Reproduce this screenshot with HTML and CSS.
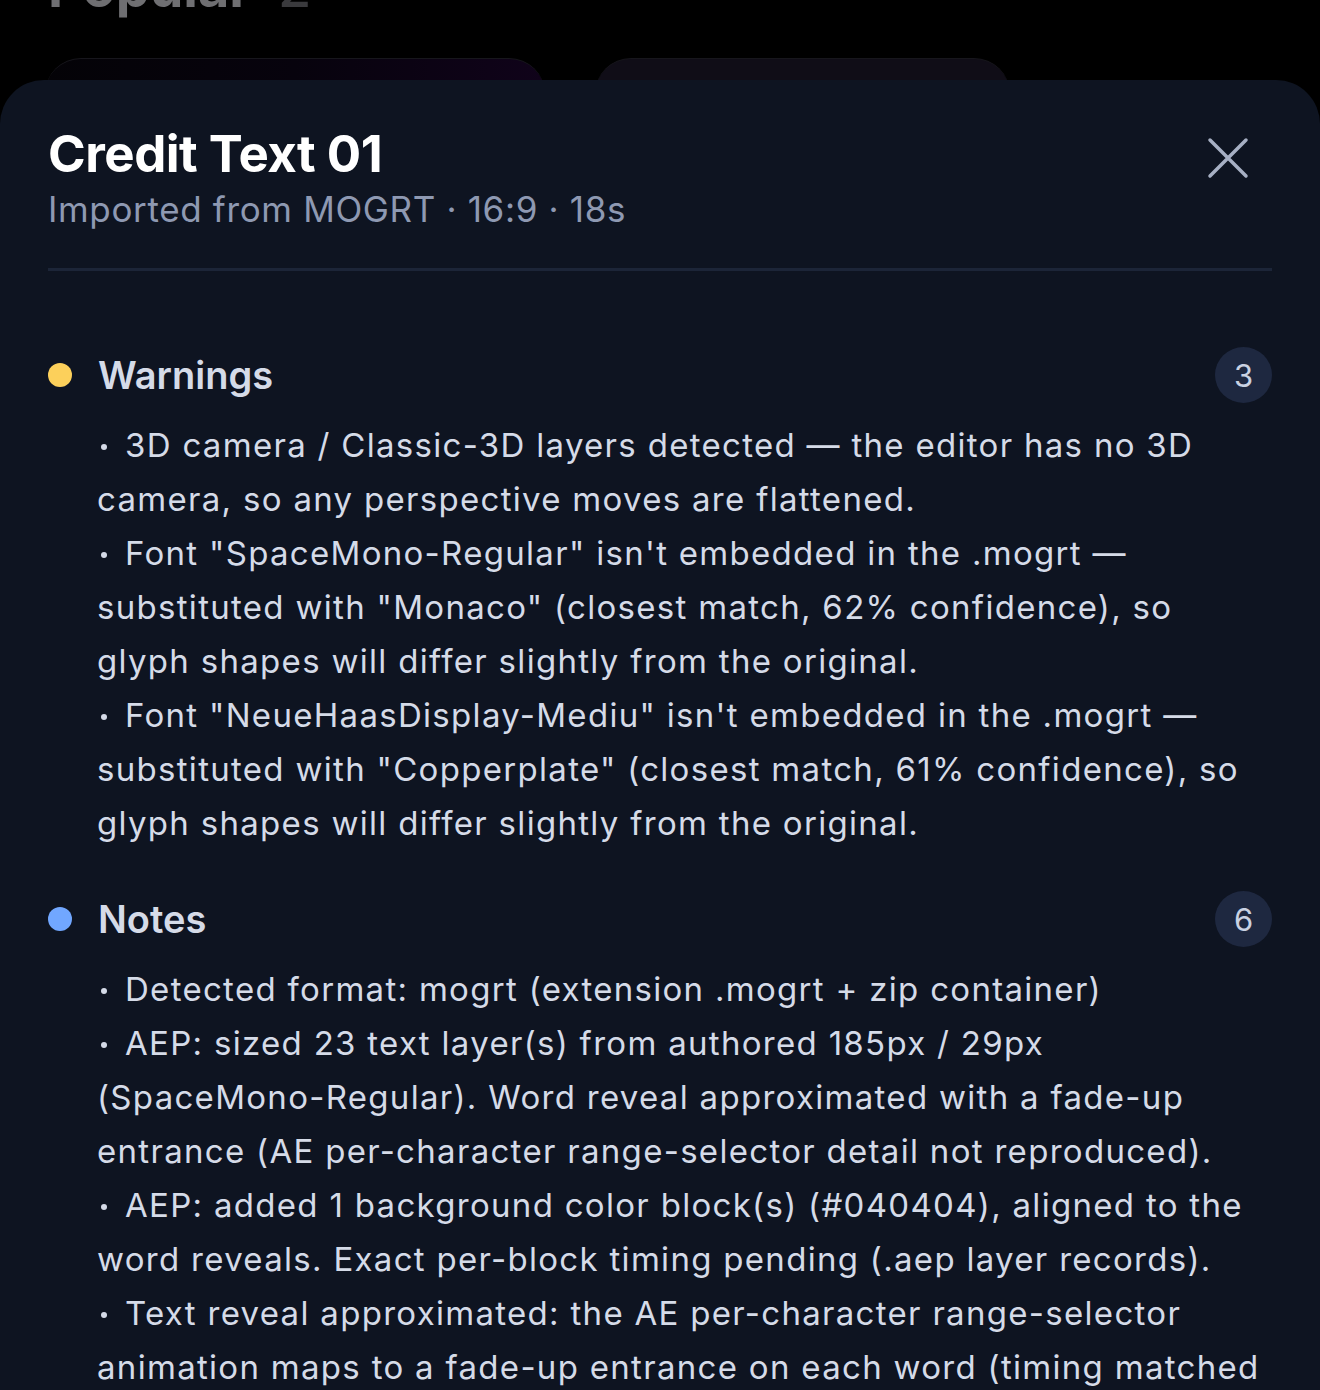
FILE: index.html
```html
<!DOCTYPE html>
<html lang="en">

<head>
  <meta charset="UTF-8">
  <meta name="viewport" content="width=device-width, initial-scale=1.0">
  <title>Credit Text 01</title>
  <link rel="stylesheet" href="styles.css">
</head>

<body>
  <!-- page behind the sheet -->
  <div class="page">
    <h2 class="shelfTitle">Popular <span class="shelfCount">2</span></h2>
    <div class="cards">
      <div class="card cardOne"></div>
      <div class="card cardTwo"></div>
    </div>
  </div>

  <!-- import report sheet -->
  <div class="sheet">
    <div class="sheetHead">
      <div>
        <h1 class="title">Credit Text 01</h1>
        <p class="meta">Imported from MOGRT · 16:9 · 18s</p>
      </div>
      <button class="close" aria-label="Close">
        <svg width="44" height="44" viewBox="0 0 44 44" fill="none">
          <path d="M4 4L40 40M40 4L4 40" stroke="#a7b0c4" stroke-width="3.5" stroke-linecap="round" />
        </svg>
      </button>
    </div>

    <section class="group">
      <div class="groupHead">
        <span class="dot warn"></span>
        <h3>Warnings</h3>
        <span class="count">3</span>
      </div>
      <ul class="items">
        <li><i class="bullet"></i>3D camera / Classic-3D layers detected — the editor has no 3D camera, so any perspective moves are flattened.</li>
        <li><i class="bullet"></i>Font "SpaceMono-Regular" isn't embedded in the .mogrt — substituted with "Monaco" (closest match, 62% confidence), so glyph shapes will differ slightly from the original.</li>
        <li><i class="bullet"></i>Font "NeueHaasDisplay-Mediu" isn't embedded in the .mogrt — substituted with "Copperplate" (closest match, 61% confidence), so glyph shapes will differ slightly from the original.</li>
      </ul>
    </section>

    <section class="group">
      <div class="groupHead">
        <span class="dot note"></span>
        <h3>Notes</h3>
        <span class="count">6</span>
      </div>
      <ul class="items">
        <li><i class="bullet"></i>Detected format: mogrt (extension .mogrt + zip container)</li>
        <li><i class="bullet"></i>AEP: sized 23 text layer(s) from authored 185px / 29px (SpaceMono-Regular). Word reveal approximated with a fade-up entrance (AE per-character range-selector detail not reproduced).</li>
        <li><i class="bullet"></i>AEP: added 1 background color block(s) (#040404), aligned to the word reveals. Exact per-block timing pending (.aep layer records).</li>
        <li><i class="bullet"></i>Text reveal approximated: the AE per-character range-selector animation maps to a fade-up entrance on each word (timing matched to the source keyframes).</li>
        <li><i class="bullet"></i>Essential Graphics controls mapped: 4 text fields, 2 colors.</li>
        <li><i class="bullet"></i>Audio tracks not found in the package.</li>
      </ul>
    </section>
  </div>
</body>

</html>
```

FILE: styles.css
```css
* {
  margin: 0;
  padding: 0;
  box-sizing: border-box;
}

html,
body {
  height: 1390px;
  overflow: hidden;
}

body {
  background: #000;
  font-family: Inter, "Noto Sans", sans-serif;
  position: relative;
}

ul li {
  list-style: none;
}

/* 背景页面 */
.page {
  padding: 0 45px;
}

.shelfTitle {
  font-size: 54px;
  font-weight: 700;
  color: #6f6f72;
  margin-top: -42px;
  padding-left: 3px;
  line-height: 60px;
}

.shelfCount {
  font-weight: 500;
  color: #3a3a3d;
  margin-left: 14px;
}

.cards {
  display: flex;
  gap: 50px;
  margin-top: 40px;
}

.card {
  height: 120px;
  border-radius: 36px;
  border-top: 1px solid #17161c;
}

.cardOne {
  width: 500px;
  background: linear-gradient(90deg, #040307 0%, #07030d 50%, #10031a 100%);
}

.cardTwo {
  width: 415px;
  background: #100d17;
}

/* 弹出面板 */
.sheet {
  position: absolute;
  left: 0;
  top: 80px;
  width: 1320px;
  height: 1400px;
  background: #0e1421;
  border-radius: 44px 44px 0 0;
  padding: 44px 48px 0;
}

.sheetHead {
  display: flex;
  justify-content: space-between;
  align-items: flex-start;
  padding-bottom: 36px;
  border-bottom: 3px solid #1c2538;
}

.title {
  font-size: 51px;
  font-weight: 700;
  color: #fff;
  line-height: 60px;
  letter-spacing: -0.5px;
}

.meta {
  font-size: 35px;
  color: #8e99b2;
  line-height: 46px;
  margin-top: 2px;
  letter-spacing: 0.65px;
}

.close {
  background: none;
  border: 0;
  margin: 12px 22px 0 0;
  width: 44px;
  height: 44px;
}

.group {
  margin-top: 76px;
}

.group + .group {
  margin-top: 41px;
}

.groupHead {
  display: flex;
  align-items: center;
  height: 56px;
}

.dot {
  width: 24px;
  height: 24px;
  border-radius: 50%;
  margin-right: 26px;
}

.warn {
  background: #fcd05b;
}

.note {
  background: #71a7ff;
}

.groupHead h3 {
  flex: 1;
  font-size: 38px;
  font-weight: 600;
  color: #d5dbe8;
}

.count {
  width: 57px;
  height: 56px;
  border-radius: 50%;
  background: #1e2840;
  color: #c9d1e2;
  font-size: 31px;
  display: flex;
  align-items: center;
  justify-content: center;
}

.items {
  padding-left: 49px;
  margin-top: 15px;
}

.items li {
  font-size: 33px;
  line-height: 54px;
  color: #d5dbe8;
  letter-spacing: 1.3px;
}

/* 列表圆点 */
.bullet {
  display: inline-block;
  width: 6px;
  height: 6px;
  border-radius: 50%;
  background: #d5dbe8;
  margin: 0 18px 0 4px;
  vertical-align: 7px;
}
```
